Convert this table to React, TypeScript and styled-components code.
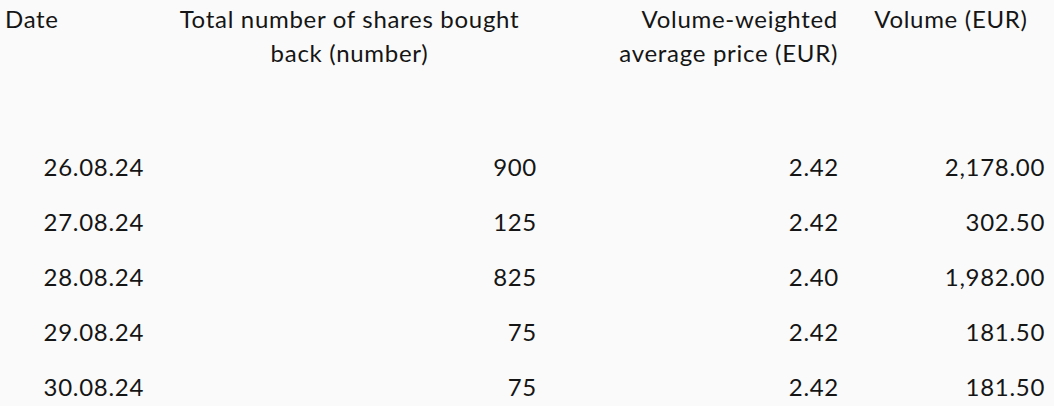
import React from "react";
import styled, { createGlobalStyle } from "styled-components";

const GlobalStyle = createGlobalStyle`
  html, body {
    margin: 0;
    padding: 0;
    background: #fafafa;
  }
  body {
    font-family: Lato, "Noto Sans", sans-serif;
    color: #151515;
  }
`;

const Table = styled.table`
  width: 1054px;
  table-layout: fixed;
  border-collapse: collapse;
  font-size: 24px;
  letter-spacing: 0.7px;
  line-height: 1.4;
`;

const HeadRow = styled.tr`
  height: 139px;
`;

const Th = styled.th<{ $align: "left" | "center" | "right" }>`
  font-weight: 400;
  vertical-align: top;
  padding: 2px 10px 0 10px;
  text-align: ${(p) => p.$align};
  ${(p) => (p.$align === "left" ? "padding-left: 5px;" : "")}
`;

const Row = styled.tr`
  height: 55px;
`;

const Td = styled.td`
  padding: 0 9px 0 10px;
  text-align: right;
  vertical-align: middle;
  white-space: nowrap;
`;

type Purchase = {
  date: string;
  shares: string;
  price: string;
  volume: string;
};

const rows: Purchase[] = [
  { date: "26.08.24", shares: "900", price: "2.42", volume: "2,178.00" },
  { date: "27.08.24", shares: "125", price: "2.42", volume: "302.50" },
  { date: "28.08.24", shares: "825", price: "2.40", volume: "1,982.00" },
  { date: "29.08.24", shares: "75", price: "2.42", volume: "181.50" },
  { date: "30.08.24", shares: "75", price: "2.42", volume: "181.50" },
];

const App = () => {
  return (
    <>
      <GlobalStyle />
      <Table>
        <colgroup>
          <col style={{ width: 153 }} />
          <col style={{ width: 393 }} />
          <col style={{ width: 302 }} />
          <col style={{ width: 206 }} />
        </colgroup>
        <thead>
          <HeadRow>
            <Th $align="left">Date</Th>
            <Th $align="center">
              Total number of shares bought
              <br />
              back (number)
            </Th>
            <Th $align="right">
              Volume-weighted
              <br />
              average price (EUR)
            </Th>
            <Th $align="center">Volume (EUR)</Th>
          </HeadRow>
        </thead>
        <tbody>
          {rows.map((r) => (
            <Row key={r.date}>
              <Td>{r.date}</Td>
              <Td>{r.shares}</Td>
              <Td>{r.price}</Td>
              <Td>{r.volume}</Td>
            </Row>
          ))}
        </tbody>
      </Table>
    </>
  );
};

export default App;
